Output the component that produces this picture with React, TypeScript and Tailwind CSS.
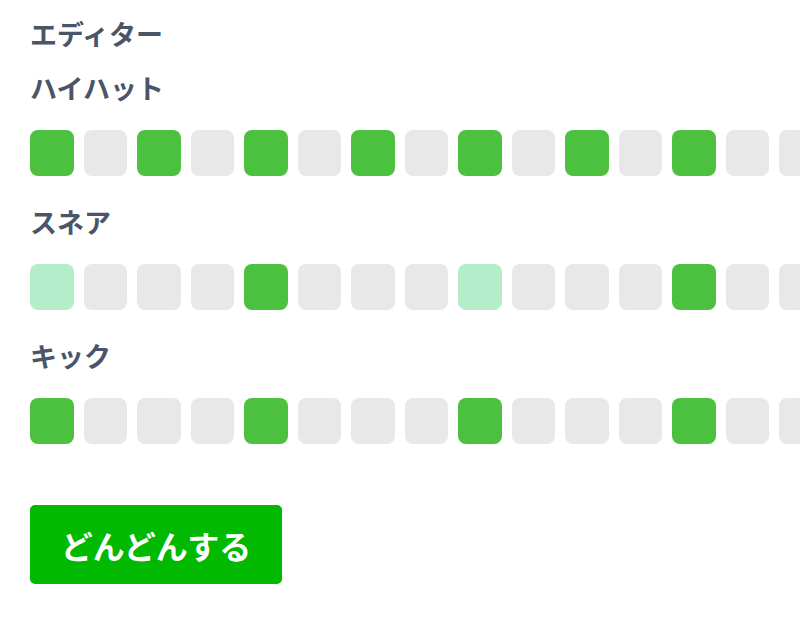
type Step = 0 | 1 | 2;

const tracks: { name: string; steps: Step[] }[] = [
  { name: 'ハイハット', steps: [1, 0, 1, 0, 1, 0, 1, 0, 1, 0, 1, 0, 1, 0, 0, 0] },
  { name: 'スネア', steps: [2, 0, 0, 0, 1, 0, 0, 0, 2, 0, 0, 0, 1, 0, 0, 0] },
  { name: 'キック', steps: [1, 0, 0, 0, 1, 0, 0, 0, 1, 0, 0, 0, 1, 0, 0, 0] },
];

function StepCell({ value }: { value: Step }) {
  const color = value === 1 ? 'bg-[#4bc13f]' : value === 2 ? 'bg-[#b4edca]' : 'bg-[#e8e8e8]';
  return <div className={`mr-[10px] h-[46px] w-[43.5px] shrink-0 rounded-[8px] ${color}`} />;
}

export default function App() {
  return (
    <div
      className="h-[622px] w-full overflow-hidden bg-white pl-[30px] pt-[14px] text-[#4a5568]"
      style={{ fontFamily: '"Noto Sans CJK JP", "Noto Sans", sans-serif' }}
    >
      <h1 className="text-[27px] font-bold leading-[39px]">エディター</h1>
      <div className="mt-[15px]">
        {tracks.map((track, i) => (
          <section key={track.name} className={i === 0 ? '' : 'mt-[26px]'}>
            <h2 className="text-[27px] font-bold leading-[39px]">{track.name}</h2>
            <div className="mt-[23px] flex flex-nowrap">
              {track.steps.map((step, j) => (
                <StepCell key={j} value={step} />
              ))}
            </div>
          </section>
        ))}
      </div>
      <button className="mt-[61px] flex h-[79px] w-[252px] items-center justify-center rounded-[5px] bg-[#00b900] text-[32px] font-bold text-white">
        どんどんする
      </button>
    </div>
  );
}
